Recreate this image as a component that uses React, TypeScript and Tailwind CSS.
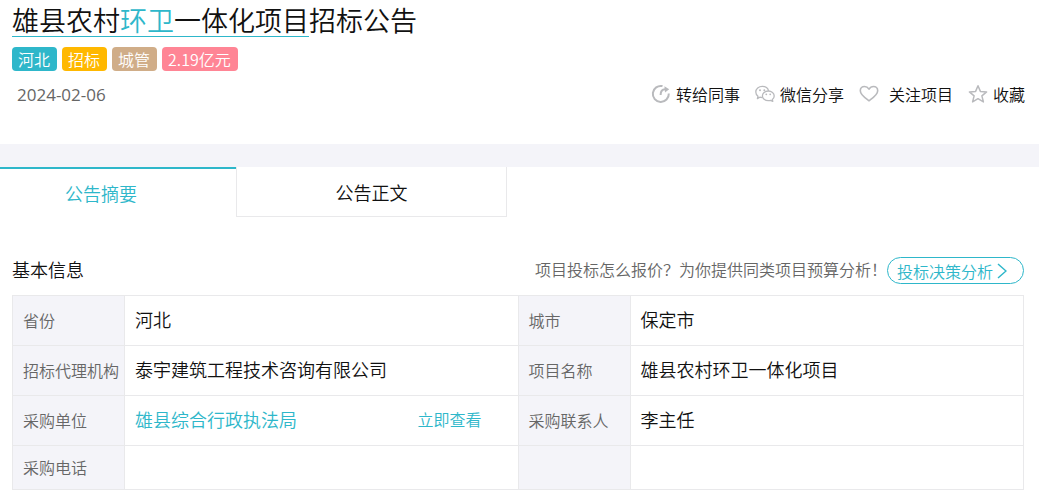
import type { ReactNode } from 'react';

const tags = [
  { text: '河北', className: 'bg-[#2eb7ca]' },
  { text: '招标', className: 'bg-[#ffb800]' },
  { text: '城管', className: 'bg-[#d0ad88]' },
  { text: '2.19亿元', className: 'bg-[#ff8595]' },
];

function ShareIcon() {
  return (
    <svg viewBox="0 0 20 20" className="w-5 h-5 shrink-0" fill="none" stroke="#b9babd" strokeWidth="2" aria-hidden="true">
      <path d="M11.500 2.100A8 8 0 1 0 17.800 9.500" />
      <path d="M9.600 11C9.600 7.200 11 5.300 14.200 5.200" />
      <path d="M13.400 2.200 18.200 5.200l-4.200 3.200Z" fill="#b9babd" stroke="none" />
    </svg>
  );
}

function WechatIcon() {
  return (
    <svg viewBox="0 0 20 20" className="w-5 h-5 shrink-0" fill="none" stroke="#b9babd" strokeWidth="1.3" strokeLinejoin="round" aria-hidden="true">
      <path d="M7.2 13.6c-.9 0-1.6-.1-2.4-.4L2.4 14.6l.6-2.3C1.6 11.2.8 9.700.8 8 .8 4.800 3.700 2.300 7.300 2.300c3.100 0 5.700 1.900 6.300 4.500" />
      <path d="M13.300 7c3.300 0 5.900 2.200 5.900 4.900 0 1.500-.7 2.700-1.900 3.600l.5 1.900-2.200-1.100c-.7.2-1.500.3-2.300.3-3.300 0-5.900-2.100-5.900-4.700S10 7 13.300 7Z" />
      <g fill="#b9babd" stroke="none">
        <circle cx="5" cy="6.300" r="1" />
        <circle cx="9.300" cy="6.300" r="1" />
        <circle cx="11.300" cy="10.300" r=".9" />
        <circle cx="15.200" cy="10.300" r=".9" />
      </g>
    </svg>
  );
}

function HeartIcon() {
  return (
    <svg viewBox="0 0 20 20" className="w-5 h-5 shrink-0" fill="none" stroke="#b9babd" strokeWidth="1.6" strokeLinejoin="round" aria-hidden="true">
      <path d="M10 16.800C6 13.700 1.300 10.700 1.300 6.700c0-2.500 1.900-4.200 4.200-4.200 2 0 3.500 1.100 4.500 2.700 1-1.600 2.500-2.700 4.500-2.700 2.300 0 4.200 1.700 4.200 4.200 0 4-4.700 7-8.700 10.100Z" />
    </svg>
  );
}

function StarIcon() {
  return (
    <svg viewBox="0 0 20 20" className="w-5 h-5 shrink-0" fill="none" stroke="#b9babd" strokeWidth="1.500" strokeLinejoin="round" aria-hidden="true">
      <path d="m10 1.700 2.400 5.700 6.200.5-4.700 4 1.500 6L10 14.700l-5.400 3.200 1.500-6-4.700-4 6.200-.5Z" />
    </svg>
  );
}

function Action({ icon, children, className = 'gap-[5px]' }: { icon: ReactNode; children: ReactNode; className?: string }) {
  return (
    <button type="button" className={`flex items-center text-base leading-[22px] text-[#111] cursor-pointer ${className}`}>
      {icon}
      {children}
    </button>
  );
}

function Label({ children }: { children?: ReactNode }) {
  return (
    <th scope="row" className="border border-[#e9e9eb] bg-[#f4f4f9] pl-[10px] pb-0.5 text-left text-base font-[350] leading-6 text-[#666] whitespace-nowrap">
      {children}
    </th>
  );
}

function Value({ children }: { children?: ReactNode }) {
  return <td className="border border-[#e9e9eb] pl-[10px] pb-[3px] text-lg leading-6 text-[#111]">{children}</td>;
}

export default function App() {
  return (
    <main className="bg-white font-[350] text-[#111] font-['Noto_Sans_CJK_SC',sans-serif]">
      <header className="pl-3 pr-[14px] pt-1 pb-[37px]">
        <h1 className="flex text-[27px] leading-8">
          <span className="border-b border-[#2eb7ca]">
            雄县农村<span className="text-[#2eb7ca]">环卫</span>一体化项目
          </span>
          招标公告
        </h1>
        <div className="flex gap-[5px] mt-[10px]">
          {tags.map((tag) => (
            <span key={tag.text} className={`h-6 pl-[6px] pr-[7px] rounded text-base leading-6 text-white ${tag.className}`}>
              {tag.text}
            </span>
          ))}
        </div>
        <div className="flex items-start justify-between mt-3">
          <time dateTime="2024-02-06" className="pl-[5px] text-[17px] font-normal leading-6 text-[#666] font-['Open_Sans',sans-serif]">
            2024-02-06
          </time>
          <div className="flex gap-[15px]">
            <Action icon={<ShareIcon />}>转给同事</Action>
            <Action icon={<WechatIcon />}>微信分享</Action>
            <Action icon={<HeartIcon />} className="gap-[10px]">关注项目</Action>
            <Action icon={<StarIcon />}>收藏</Action>
          </div>
        </div>
      </header>

      <div className="h-[23px] bg-[#f4f4f9]" />

      <nav className="flex h-[50px] text-lg leading-6">
        <button type="button" className="w-[236px] pr-[34px] border-t-2 border-[#2eb7ca] text-[#2eb7ca] cursor-pointer">
          公告摘要
        </button>
        <button type="button" className="w-[271px] border border-t-0 border-[#e9e9eb] cursor-pointer">
          公告正文
        </button>
      </nav>

      <section className="pl-3 pr-[15px] pt-10 pb-1">
        <div className="flex items-start justify-between">
          <h2 className="text-lg leading-6">基本信息</h2>
          <div className="flex items-start">
            <p className="text-base leading-6 text-[#666]">项目投标怎么报价？为你提供同类项目预算分析！</p>
            <a href="#analysis" className="flex items-center h-[27px] pl-[9px] pr-4 gap-1 border border-[#2eb7ca] rounded-full text-base leading-6 text-[#2eb7ca]">
              投标决策分析
              <svg viewBox="0 0 10 16" className="w-[10px] h-4" fill="none" stroke="currentColor" strokeWidth="1.5" aria-hidden="true">
                <path d="m1 1 8 7-8 7" />
              </svg>
            </a>
          </div>
        </div>

        <table className="w-full mt-[11px] table-fixed border-collapse">
          <colgroup>
            <col className="w-28" />
            <col />
            <col className="w-28" />
            <col />
          </colgroup>
          <tbody>
            <tr className="h-[50px]">
              <Label>省份</Label>
              <Value>河北</Value>
              <Label>城市</Label>
              <Value>保定市</Value>
            </tr>
            <tr className="h-[50px]">
              <Label>招标代理机构</Label>
              <Value>泰宇建筑工程技术咨询有限公司</Value>
              <Label>项目名称</Label>
              <Value>雄县农村环卫一体化项目</Value>
            </tr>
            <tr className="h-[50px]">
              <Label>采购单位</Label>
              <Value>
                <div className="flex items-center justify-between pr-9 text-[#2eb7ca]">
                  <a href="#buyer">雄县综合行政执法局</a>
                  <a href="#view" className="text-base">立即查看</a>
                </div>
              </Value>
              <Label>采购联系人</Label>
              <Value>李主任</Value>
            </tr>
            <tr className="h-11">
              <Label>采购电话</Label>
              <Value />
              <Label />
              <Value />
            </tr>
          </tbody>
        </table>
      </section>
    </main>
  );
}
